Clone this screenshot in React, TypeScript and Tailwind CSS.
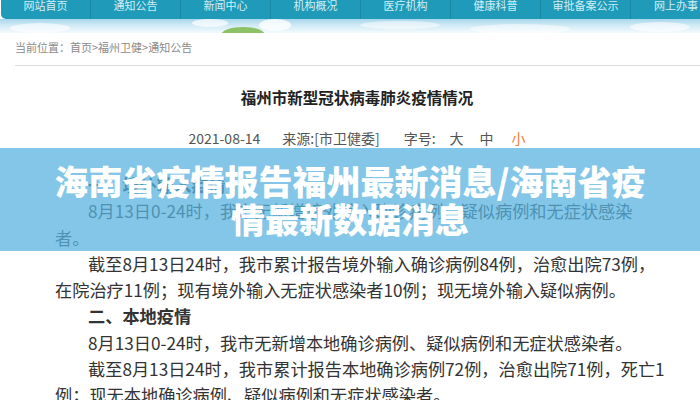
import React from "react";

const navItems = ["网站首页", "通知公告", "新闻中心", "机构概况", "医疗机构", "健康科普", "审批备案公示", "网上办事"];

export default function App() {
  const font = { fontFamily: '"Noto Sans CJK SC", "Noto Sans", sans-serif' };
  return (
    <div className="relative w-[700px] h-[400px] overflow-hidden bg-white" style={font}>
      {/* nav */}
      <div className="flex h-[19px] bg-[#1f9bb9] rounded-bl-[5px] ml-[1px]">
        {navItems.map((t, i) => (
          <div
            key={t}
            className={`w-[90px] shrink-0 text-center text-[11px] leading-[10px] text-[#d3eef4] ${i < 7 ? "border-r border-[#1889a5]" : ""}`}
          >
            {t}
          </div>
        ))}
      </div>
      {/* sky banner */}
      <div className="relative h-[14px] bg-gradient-to-b from-[#a9d6ec] via-[#d4ecf7] to-[#f4fafd] overflow-hidden">
        <svg width="700" height="14" className="absolute left-0 top-0">
          <ellipse cx="40" cy="9" rx="30" ry="5" fill="#ffffff" opacity="0.6" />
          <ellipse cx="210" cy="4" rx="18" ry="4" fill="#ffffff" opacity="0.7" />
          <ellipse cx="243" cy="16" rx="22" ry="8" fill="#8cc265" />
          <ellipse cx="275" cy="6" rx="16" ry="6" fill="#ffffff" opacity="0.8" />
          <ellipse cx="400" cy="6" rx="40" ry="4" fill="#ffffff" opacity="0.5" />
          <ellipse cx="520" cy="10" rx="50" ry="5" fill="#ffffff" opacity="0.5" />
          <ellipse cx="660" cy="8" rx="30" ry="5" fill="#ffffff" opacity="0.6" />
        </svg>
      </div>
      {/* breadcrumb */}
      <div className="ml-[15px] mt-[7px] text-[11px] leading-[14px] text-[#8a8a8a]">当前位置：首页&gt;福州卫健&gt;通知公告</div>
      <div className="ml-[15px] mt-[11px] border-b border-[#dcdcdc]" />
      {/* title */}
      <div className="mt-[21px] pl-[14px] text-center text-[15.5px] leading-[20px] font-bold text-[#222]">福州市新型冠状病毒肺炎疫情情况</div>
      {/* meta */}
      <div className="mt-[22px] flex justify-center text-[14px] leading-[18px] text-[#555] pl-[14px]">
        <span>2021-08-14</span>
        <span className="ml-[22px]">来源:[市卫健委]</span>
        <span className="ml-[24px]">字号:</span>
        <span className="ml-[14px]">大</span>
        <span className="ml-[16px]">中</span>
        <span className="ml-[18px] text-[#f07a30]">小</span>
      </div>
      {/* body */}
      <div className="mt-[25px] ml-[55px] text-[17.2px] leading-[26.3px] text-[#333] whitespace-nowrap">
        <div className="pl-[33px] font-bold">一、境外输入疫情</div>
        <div className="pl-[33px]">8月13日0-24时，我市无新增境外输入确诊病例、疑似病例和无症状感染</div>
        <div>者。</div>
        <div className="pl-[33px]">截至8月13日24时，我市累计报告境外输入确诊病例84例，治愈出院73例，</div>
        <div>在院治疗11例；现有境外输入无症状感染者10例；现无境外输入疑似病例。</div>
        <div className="pl-[33px] font-bold">二、本地疫情</div>
        <div className="pl-[33px]">8月13日0-24时，我市无新增本地确诊病例、疑似病例和无症状感染者。</div>
        <div className="pl-[33px]">截至8月13日24时，我市累计报告本地确诊病例72例，治愈出院71例，死亡1</div>
        <div>例；现无本地确诊病例、疑似病例和无症状感染者。</div>
      </div>
      {/* overlay */}
      <div className="absolute left-0 right-0 top-[148px] h-[103px] bg-[rgba(88,178,222,0.74)] flex flex-col items-center justify-center">
        <div className="text-center text-white font-black text-[34px] leading-[38px] whitespace-nowrap">
          海南省疫情报告福州最新消息/海南省疫
          <br />
          情最新数据消息
        </div>
      </div>
    </div>
  );
}
